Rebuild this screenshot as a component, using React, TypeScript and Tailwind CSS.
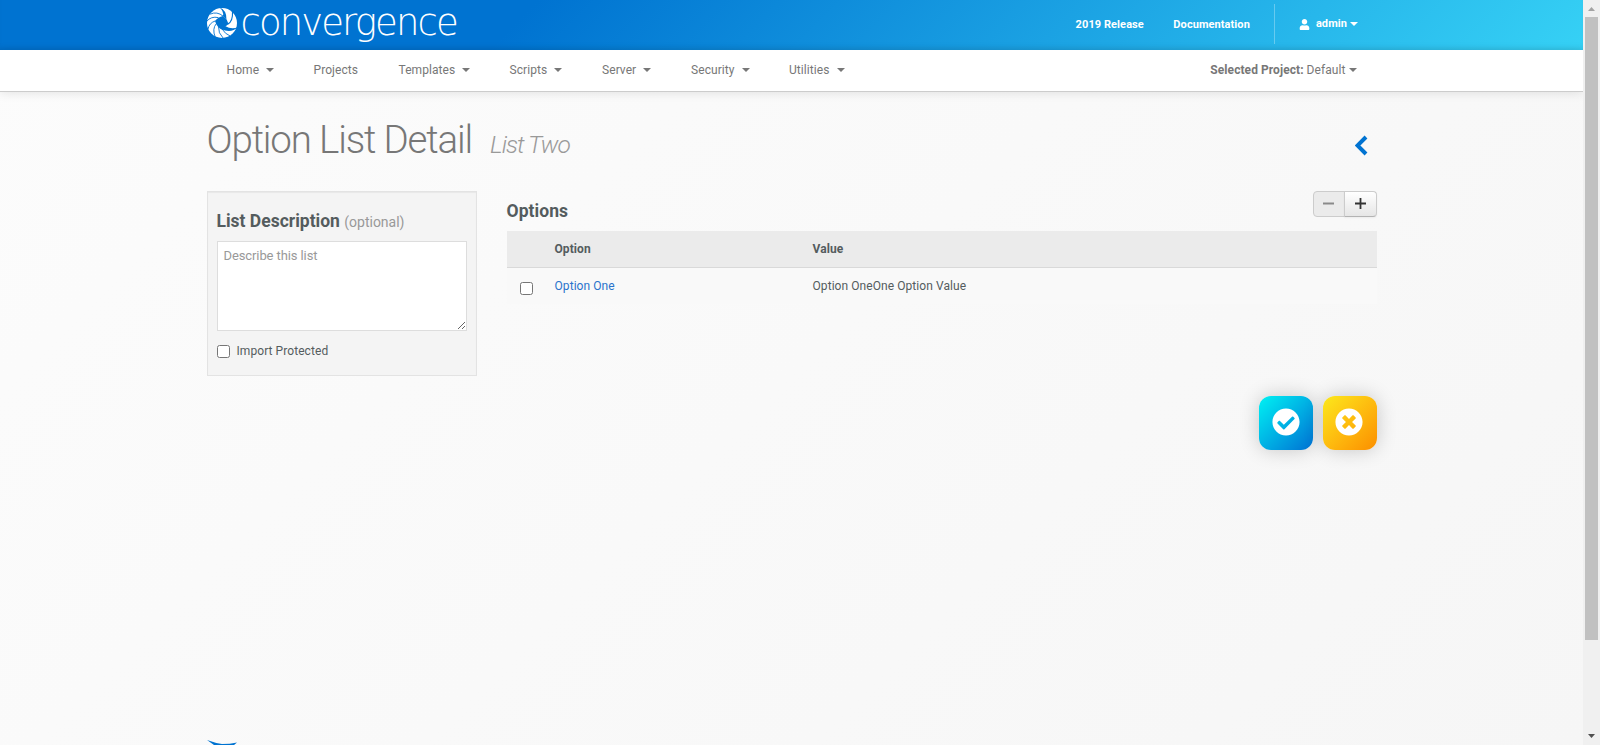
import { FaUser, FaCheckCircle, FaTimesCircle } from "react-icons/fa";

const menu = [
  { label: "Home", caret: true, width: "w-[87px]" },
  { label: "Projects", caret: false, width: "w-[85px]" },
  { label: "Templates", caret: true, width: "w-[111px]" },
  { label: "Scripts", caret: true, width: "w-[92.5px]" },
  { label: "Server", caret: true, width: "w-[89px]" },
  { label: "Security", caret: true, width: "w-[98px]" },
  { label: "Utilities", caret: true, width: "w-[80px]" },
];

function Caret({ className = "" }: { className?: string }) {
  return (
    <svg className={className} width="8" height="4" viewBox="0 0 8 4" fill="currentColor">
      <path d="M0 0h8L4 4z" />
    </svg>
  );
}

function LogoMark() {
  return (
    <svg className="-ml-px shrink-0" width="32" height="32" viewBox="-16 -16 32 32">
      <circle r="15" fill="#fff" />
      <path d="M-7 -2 Q-4 -6 1 -7 Q5 -4 6.500 1 Q3 3 1 7 Q-5 5 -7 -2z" fill="#0073d1" />
      <g fill="#0073d1">
        <path d="M-3 -16 Q5 -13 4.500 -3 L1 -7 Q2 -12 -3 -16z" />
        <path d="M16 4 Q9 11 -1 6 L3 3 Q10 7 16 4z" />
      </g>
      <g fill="none" stroke="#0073d1" strokeLinecap="round">
        <path d="M6 1 Q11 -2 10.500 -11" strokeWidth="1.100" />
        <path d="M0 6 Q3 11 8 13" strokeWidth="0.900" />
        <path d="M-3.500 4 Q-4 10 1 15" strokeWidth="0.900" />
        <path d="M-6 1 Q-10 6 -7 13.500" strokeWidth="0.900" />
        <path d="M-7 -2 Q-13 0 -14 6" strokeWidth="0.900" />
        <path d="M-4 -5.500 Q-11 -7 -15 -2" strokeWidth="0.900" />
        <path d="M1 -7 Q-5 -12 -11.500 -9" strokeWidth="0.900" />
      </g>
    </svg>
  );
}

function Header() {
  return (
    <header className="h-[50px] bg-[linear-gradient(135deg,#0073d1_0%,#0073d1_33%,#36d1f5_100%)] shadow-[inset_0_-4px_6px_-4px_rgba(0,0,0,0.12)]">
      <div className="mx-auto flex h-full w-[1170px] justify-between">
        <div className="flex pt-[7px]">
          <LogoMark />
          <span className="ml-[3px] font-['DejaVu_Sans'] text-[37px] leading-[31px] font-extralight tracking-[-1.9px] text-white">convergence</span>
        </div>
        <div className="flex items-start pt-1 text-[11px] font-bold tracking-[0.08px] text-white">
          <span className="mr-[29.5px] leading-[41px]">2019 Release</span>
          <span className="mr-6 leading-[41px]">Documentation</span>
          <div className="flex h-10 items-center border-l border-white/30 pr-[18.5px] pl-6">
            <FaUser className="mr-1.5 text-[11px]" />
            <span className="pt-px">admin</span>
            <Caret className="ml-[3px]" />
          </div>
        </div>
      </div>
    </header>
  );
}

function NavBar() {
  return (
    <nav className="h-[42px] border-b border-[#ccc] bg-white text-[#777] shadow-[0_1px_10px_rgba(0,0,0,0.1)]">
      <div className="mx-auto flex h-10 w-[1170px] items-center justify-between pr-5 pl-5">
        <ul className="flex">
          {menu.map((m) => (
            <li key={m.label} className={`flex items-center ${m.width}`}>
              {m.label}
              {m.caret && <Caret className="ml-[7px]" />}
            </li>
          ))}
        </ul>
        <div className="flex items-center">
          <b className="mr-[3px]">Selected Project:</b>Default
          <Caret className="ml-[3px]" />
        </div>
      </div>
    </nav>
  );
}

function Check({ className = "" }: { className?: string }) {
  return <input type="checkbox" className={`m-0 block size-[13px] ${className}`} />;
}

function ListPanel() {
  return (
    <section className="h-[185px] w-[270px] border border-[#e3e3e3] bg-[#f4f4f4] px-[9px] pt-[19px] shadow-[inset_0_1px_1px_rgba(0,0,0,0.05)]">
      <h4 className="text-[17.5px] leading-5 font-bold tracking-normal text-[#545c5e]">
        List Description <small className="text-sm font-normal text-[#999]">(optional)</small>
      </h4>
      <textarea
        placeholder="Describe this list"
        className="mt-[9px] block h-[90px] w-[250px] resize border border-[#ddd] bg-white px-1.5 py-1 text-[13px] leading-5 tracking-[-0.1px] placeholder:text-[#999]"
      />
      <label className="mt-[10px] flex h-5 items-center">
        <Check className="mt-px mr-[7px]" />
        Import Protected
      </label>
    </section>
  );
}

function OptionsPanel() {
  return (
    <section className="w-[870px]">
      <div className="flex h-10 justify-between">
        <h4 className="pt-[10px] text-[17.5px] leading-5 font-bold text-[#545c5e]">Options</h4>
        <div className="flex h-[26px] w-16">
          <button className="flex w-8 items-center justify-center rounded-l border border-[#ccc] bg-[#ebebeb] pb-px">
            <svg width="11" height="11" viewBox="0 0 11 11"><path d="M0 4.500h11v2H0z" fill="#8a8a8a" /></svg>
          </button>
          <button className="-ml-px flex w-[33px] items-center justify-center rounded-r border border-[#ccc] border-b-[#b3b3b3] bg-linear-to-b from-white to-[#e6e6e6] pb-px shadow-[0_1px_2px_rgba(0,0,0,0.05)]">
            <svg width="11" height="11" viewBox="0 0 11 11"><path d="M0 4.600h4.600V0h1.800v4.600H11v1.800H6.400V11H4.600V6.400H0z" fill="#333" /></svg>
          </button>
        </div>
      </div>
      <div className="grid h-[37px] grid-cols-[48px_258px_1fr] border-b border-[#d9d9d9] bg-[#ebebeb] leading-[36px] font-bold">
        <span />
        <span>Option</span>
        <span>Value</span>
      </div>
      <div className="grid h-9 grid-cols-[48px_258px_1fr] bg-[#f9f9f9] leading-[36px]">
        <Check className="mt-[14px] ml-[13px]" />
        <a className="text-[#2a73cc]">Option One</a>
        <span>Option OneOne Option Value</span>
      </div>
    </section>
  );
}

function ScrollBar() {
  return (
    <div className="flex h-[745px] w-[17px] flex-col items-center bg-[#f0f0f0]">
      <svg className="h-[17px] w-[17px] shrink-0" viewBox="0 0 17 17"><path d="M5 11h7L8.500 7z" fill="#a3a3a3" /></svg>
      <div className="h-[623px] w-[13px] bg-[#c1c1c1]" />
      <svg className="mt-auto h-[17px] w-[17px] shrink-0" viewBox="0 0 17 17"><path d="M5 6h7L8.500 10z" fill="#505050" /></svg>
    </div>
  );
}

export default function App() {
  return (
    <div className="flex h-[745px] w-[1600px] overflow-hidden font-['Roboto',sans-serif] text-xs tracking-[0.07px] text-[#545c5e]">
      <div className="flex w-[1583px] flex-col bg-[linear-gradient(135deg,#fcfcfc,#f6f6f6)]">
        <Header />
        <NavBar />
        <main className="mx-auto flex w-[1170px] flex-1 flex-col">
          <div className="flex h-[99px] items-start justify-between pt-7 pr-[9px]">
            <h1 className="text-[38.5px] leading-10 font-light tracking-[-1.15px] text-[#777]">
              Option List Detail<small className="ml-[18px] text-[24.5px] font-light tracking-[-1px] text-[#999] italic">List Two</small>
            </h1>
            <svg className="mt-[15px]" width="13" height="21" viewBox="0 0 13 21">
              <path d="M11 2 2.500 10.500 11 19" fill="none" stroke="#0073d1" strokeWidth="4" />
            </svg>
          </div>
          <div className="flex justify-between">
            <ListPanel />
            <OptionsPanel />
          </div>
          <div className="mt-5 flex justify-end gap-[10px] text-[28px] text-white">
            <button className="flex size-[54px] items-center justify-center rounded-xl bg-linear-to-br from-[#00f2f2] to-[#0070d2] pb-[2px] shadow-[0_0_20px_rgba(0,0,0,0.2)]"><FaCheckCircle /></button>
            <button className="flex size-[54px] items-center justify-center rounded-xl bg-linear-to-br from-[#fbe81c] to-[#fb8e00] pr-px pb-[2px] shadow-[0_0_20px_rgba(0,0,0,0.2)]"><FaTimesCircle /></button>
          </div>
          <svg className="mt-auto" width="50" height="5" viewBox="0 0 50 5">
            <path d="M0 0 Q8 3 15 4 Q23 4 30 2.500 L27 5H7z" fill="#0073d1" />
          </svg>
        </main>
      </div>
      <ScrollBar />
    </div>
  );
}
